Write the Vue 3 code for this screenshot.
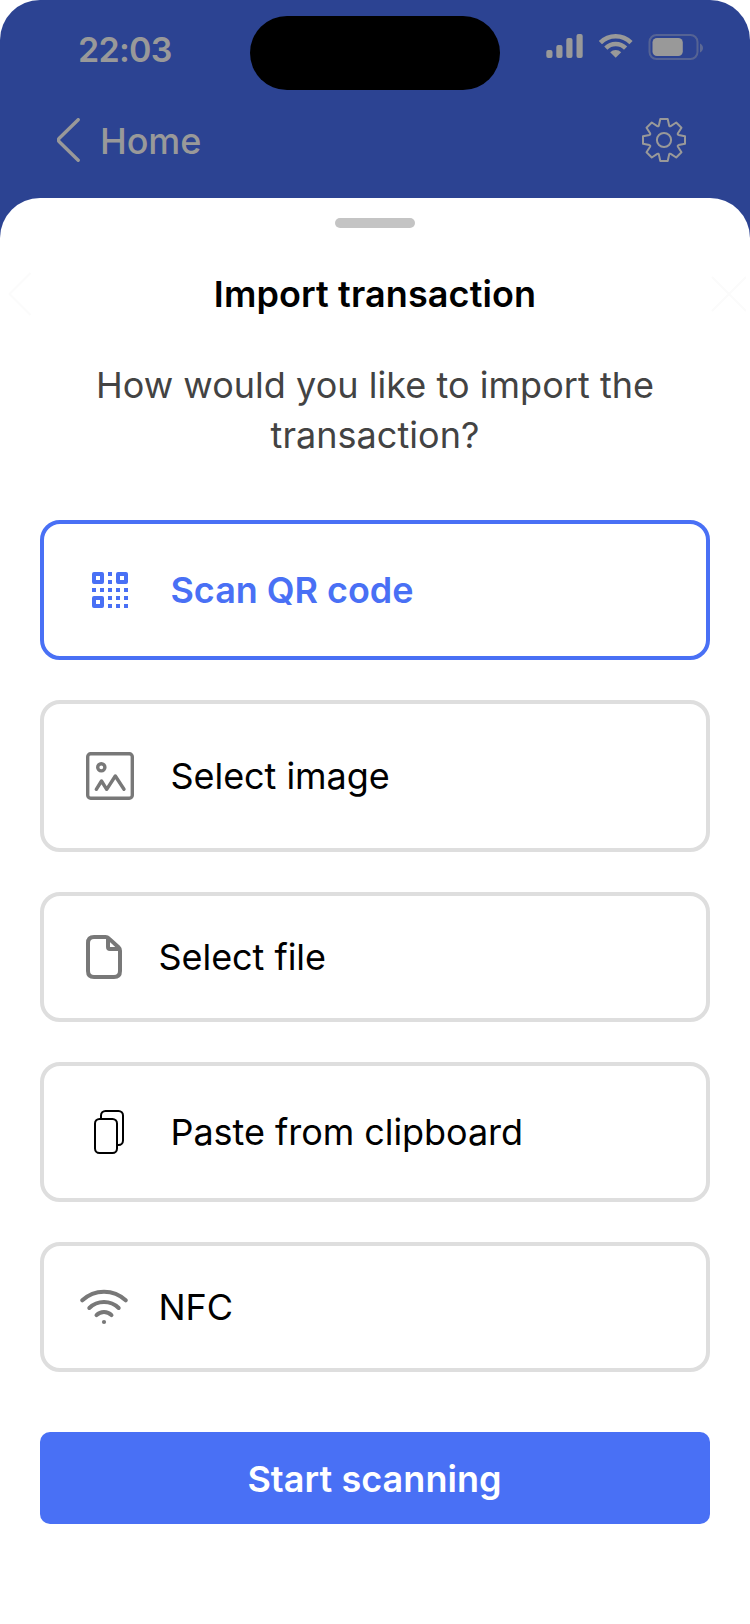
<script setup>
const options = [
  { id: 'qr', label: 'Scan QR code', height: 'mid', selected: true },
  { id: 'image', label: 'Select image', height: 'tall' },
  { id: 'file', label: 'Select file', height: 'low', narrow: true },
  { id: 'paste', label: 'Paste from clipboard', height: 'mid' },
  { id: 'nfc', label: 'NFC', height: 'low', narrow: true },
]

// Eight-toothed gear outline around the origin
const point = (x, y, k) => {
  const a = (k * Math.PI) / 4
  const px = x * Math.cos(a) - y * Math.sin(a)
  const py = x * Math.sin(a) + y * Math.cos(a)
  return `${px.toFixed(2)} ${py.toFixed(2)}`
}
let gear = `M${point(-5.1, -14.6, 0)}`
for (let k = 0; k < 8; k++) {
  gear += `L${point(-3.7, -21, k)}L${point(3.7, -21, k)}L${point(5.1, -14.6, k)}`
  gear += `Q${point(5.5, -13.3, k)} ${point(-5.1, -14.6, k + 1)}`
}
gear += 'Z'

// Small QR modules on a 9x9 grid
const dots = [
  [4, 0], [4, 2],
  [0, 4], [2, 4], [4, 4], [6, 4], [8, 4],
  [4, 6], [6, 6], [8, 6],
  [4, 8], [6, 8], [8, 8],
]
const finders = [[0, 0], [6, 0], [0, 6]]
</script>

<template>
  <div class="screen">
    <header class="top">
      <div class="status">
        <span class="time">22:03</span>
        <div class="island"></div>
        <div class="indicators">
          <svg width="38" height="28" viewBox="0 0 38 28" fill="#999">
            <rect x="0.3" y="17" width="6.2" height="8" rx="2" />
            <rect x="10.3" y="12" width="6.2" height="13" rx="2" />
            <rect x="20.3" y="5" width="6.2" height="20" rx="2" />
            <rect x="30.5" y="1" width="6.2" height="24" rx="2" />
          </svg>
          <svg width="36" height="28" viewBox="0 0 36 28" fill="none" stroke="#999" stroke-width="4.5">
            <path d="M2.4 9.7A21.6 21.6 0 0 1 33 9.7" />
            <path d="M7.8 15.1A14 14 0 0 1 27.6 15.1" />
            <path d="M17.7 24.8L12.2 19.2A8 8 0 0 1 23.2 19.2Z" fill="#999" stroke="none" />
          </svg>
          <svg width="56" height="28" viewBox="0 0 56 28">
            <rect x="1.5" y="2" width="48" height="24" rx="7" fill="none" stroke="#999" stroke-opacity=".38" stroke-width="2" />
            <rect x="4.5" y="5" width="30.3" height="18" rx="4.5" fill="#999" />
            <path d="M52 10.5C53.7 11.3 55 12.8 55 15S53.7 18.7 52 19.5Z" fill="#999" fill-opacity=".45" />
          </svg>
        </div>
      </div>
      <nav class="nav">
        <svg width="24" height="44" viewBox="0 0 24 44" fill="none" stroke="#999" stroke-width="3.4" stroke-linecap="round" stroke-linejoin="round">
          <path d="M21.2 1.7L2 20.5Q0.7 22 2 23.5L21.2 42.3" />
        </svg>
        <span class="home">Home</span>
        <svg class="gear" width="44" height="44" viewBox="-22 -22 44 44" fill="none" stroke="#999" stroke-width="2" stroke-linejoin="round">
          <path :d="gear" />
          <circle r="7.1" />
        </svg>
      </nav>
    </header>

    <main class="sheet">
      <div class="handle"></div>
      <div class="title-row">
        <svg width="36" height="44" viewBox="0 0 36 44" fill="none" stroke="#fbfbfb" stroke-width="2" stroke-linejoin="round">
          <path d="M22.5 1L1.5 22L22.5 43" />
        </svg>
        <h1>Import transaction</h1>
        <svg width="36" height="44" viewBox="0 0 36 44" fill="none" stroke="#fbfbfb" stroke-width="2">
          <path d="M2 5L36 39M36 5L2 39" />
        </svg>
      </div>
      <p class="question">How would you like to import the transaction?</p>

      <div class="options">
        <div v-for="o in options" :key="o.id" class="option" :class="[o.height, { selected: o.selected }]">
          <div class="icon" :class="{ narrow: o.narrow }">
            <svg v-if="o.id === 'qr'" width="36" height="36" viewBox="0 0 36 36" fill="#4970f5">
              <rect v-for="([x, y], i) in dots" :key="i" :x="x * 4" :y="y * 4" width="4" height="4" />
              <rect v-for="([x, y], i) in finders" :key="'f' + i" :x="x * 4 + 2" :y="y * 4 + 2" width="8" height="8" fill="none" stroke="#4970f5" stroke-width="4" stroke-linejoin="round" />
            </svg>
            <svg v-else-if="o.id === 'image'" width="48" height="48" viewBox="0 0 48 48" fill="none" stroke="#787878" stroke-width="3.4" stroke-linecap="round" stroke-linejoin="round">
              <rect x="1.7" y="1.7" width="44.6" height="44.6" rx="3" />
              <circle cx="15.3" cy="15.3" r="3.6" />
              <path d="M10.3 37.3L15.5 29L20.7 37.3L29.3 24L38 37.3" />
            </svg>
            <svg v-else-if="o.id === 'file'" width="36" height="44" viewBox="0 0 36 44" fill="none" stroke="#787878" stroke-width="4" stroke-linejoin="round">
              <path d="M8 2H19.6Q21.4 2 22.8 3.4L32.5 12.3Q34 13.7 34 15.8V36Q34 42 28 42H8Q2 42 2 36V8Q2 2 8 2Z" />
              <path d="M22 3V12Q22 14 24 14H33.5" />
            </svg>
            <svg v-else-if="o.id === 'paste'" width="48" height="48" viewBox="0 0 48 48" fill="none" stroke="#000" stroke-width="2">
              <rect x="9" y="11" width="22" height="34" rx="4.5" />
              <path d="M15 11V7.5A4.5 4.5 0 0 1 19.5 3H32.5A4.5 4.5 0 0 1 37 7.5V32.5A4.5 4.5 0 0 1 32.5 37H31.5" />
            </svg>
            <svg v-else width="48" height="48" viewBox="0 0 48 48" fill="none" stroke="#787878" stroke-width="4" stroke-linecap="round">
              <path d="M2.3 17.3A31.7 31.7 0 0 1 45.7 17.3" />
              <path d="M9.3 25A21 21 0 0 1 38.7 25" />
              <path d="M16.5 32.2A10.6 10.6 0 0 1 31.5 32.2" />
              <circle cx="24" cy="39" r="2.1" fill="#787878" stroke="none" />
            </svg>
          </div>
          <span class="label">{{ o.label }}</span>
        </div>
      </div>

      <button class="start">Start scanning</button>
    </main>
  </div>
</template>

<style>
body {
  background: #fff;
}
</style>

<style scoped>
.screen {
  width: 750px;
  height: 1624px;
  overflow: hidden;
  background: #fff;
  font-family: Inter, "Liberation Sans", sans-serif;
  font-size: 36px;
}
.top {
  height: 238px;
  box-sizing: border-box;
  background: #2c4392;
  border-radius: 40px 40px 0 0;
  color: #999;
}
.status {
  display: grid;
  grid-template-columns: 250px 250px 250px;
  height: 100px;
}
.time {
  padding-left: 78px;
  line-height: 100px;
  font-size: 34px;
  font-weight: 600;
  letter-spacing: -0.7px;
}
.island {
  height: 74px;
  margin-top: 16px;
  border-radius: 37px;
  background: #000;
}
.indicators {
  display: flex;
  gap: 14px;
  padding: 33px 0 0 46px;
}
.nav {
  display: flex;
  align-items: center;
  height: 80px;
  padding: 0 64px 0 57px;
}
.home {
  margin: 2px 0 0 19px;
  font-weight: 500;
  letter-spacing: -0.1px;
}
.gear {
  margin-left: auto;
}
.sheet {
  display: flex;
  flex-direction: column;
  height: 1426px;
  margin-top: -40px;
  padding: 20px 40px 0;
  box-sizing: border-box;
  position: relative;
  background: #fff;
  border-radius: 40px 40px 0 0;
}
.handle {
  width: 80px;
  height: 10px;
  margin: 0 auto;
  border-radius: 5px;
  background: #c4c4c4;
}
.title-row {
  display: flex;
  align-items: center;
  justify-content: space-between;
  height: 50px;
  margin: 41px -36px 0 -32px;
}
h1 {
  margin: 0 4px 0 0;
  font-size: 36px;
  font-weight: 600;
  line-height: 50px;
  letter-spacing: 0.11px;
  color: #000;
}
.question {
  width: 600px;
  margin: 41px auto 60px;
  line-height: 50px;
  letter-spacing: 0.04px;
  text-align: center;
  color: #434343;
}
.options {
  display: flex;
  flex-direction: column;
  gap: 40px;
}
.option {
  display: flex;
  align-items: center;
  gap: 36px;
  box-sizing: border-box;
  padding-left: 42px;
  border: 4px solid #dedede;
  border-radius: 20px;
  color: #000;
}
.label {
  margin-left: 0.5px;
  letter-spacing: -0.05px;
}
.low {
  height: 130px;
}
.mid {
  height: 140px;
}
.tall {
  height: 152px;
}
.selected {
  border-color: #4970f5;
  color: #4970f5;
  font-weight: 600;
}
.icon {
  display: flex;
  align-items: center;
  justify-content: center;
  width: 48px;
}
.icon.narrow {
  width: 36px;
}
.icon svg {
  flex: none;
}
.start {
  height: 92px;
  margin-top: 60px;
  padding: 2px 1px 0 0;
  border: 0;
  border-radius: 10px;
  background: #4970f5;
  color: #fff;
  font: inherit;
  font-weight: 600;
  letter-spacing: 0.05px;
}
</style>
